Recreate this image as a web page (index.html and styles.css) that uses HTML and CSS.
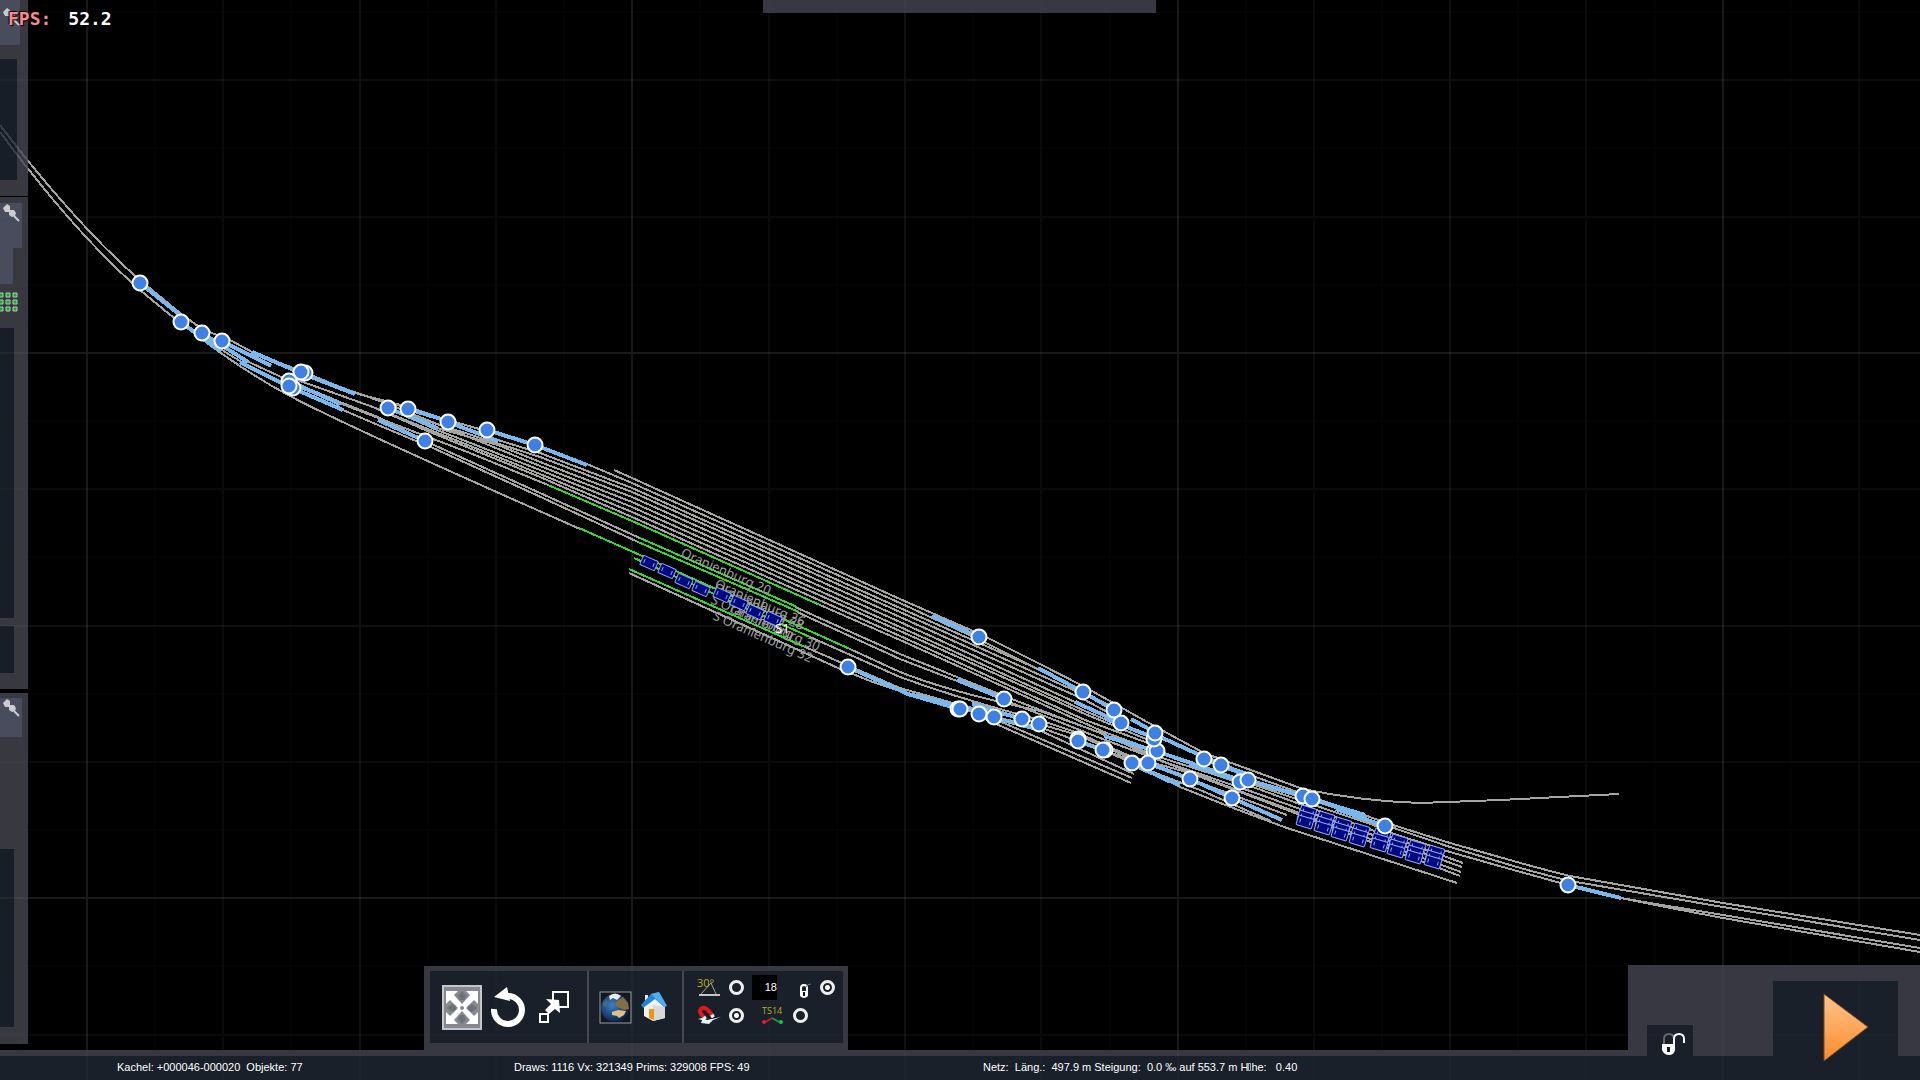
FILE: index.html
```html
<!DOCTYPE html>
<html lang="de">
<head>
    <meta charset="UTF-8">
    <meta name="viewport" content="width=device-width, initial-scale=1.0">
    <title>Gleisplan Oranienburg</title>
    <link rel="stylesheet" href="styles.css">
</head>
<body>
    <!-- Track map -->
    <svg class="map" viewBox="0 0 1920 1080" preserveAspectRatio="xMidYMid slice">
        <defs>
            <g id="grid">
                <path class="grid_faint" d="M19 0V1080M155 0V1080M291 0V1080M428 0V1080M564 0V1080M700 0V1080M837 0V1080M973 0V1080M1110 0V1080M1246 0V1080M1382 0V1080M1518 0V1080M1655 0V1080M1791 0V1080M0 12H1920M0 148H1920M0 285H1920M0 421H1920M0 557H1920M0 694H1920M0 830H1920M0 966H1920"/>
                <path class="grid_minor" d="M223 0V1080M496 0V1080M769 0V1080M1041 0V1080M1314 0V1080M1586 0V1080M1859 0V1080M0 217H1920M0 489H1920M0 762H1920M0 1035H1920"/>
                <path class="grid_middle" d="M360 0V1080M905 0V1080M1450 0V1080M0 80H1920M0 626H1920"/>
                <path class="grid_major" d="M87 0V1080M632 0V1080M1178 0V1080M1723 0V1080M0 353H1920M0 898H1920"/>
            </g>
            <circle id="sw" r="7.5"/>
            <g id="car">
                <rect x="-8" y="-5" width="16" height="10" rx="1"/>
                <path d="M-5 -2v4M5 -2v4"/>
            </g>
            <g id="cars">
                <use href="#car" transform="translate(1305 822) rotate(17)"/>
                <use href="#car" transform="translate(1323 828) rotate(17)"/>
                <use href="#car" transform="translate(1340 834) rotate(17)"/>
                <use href="#car" transform="translate(1358 840) rotate(17)"/>
                <use href="#car" transform="translate(1379 845) rotate(17)"/>
                <use href="#car" transform="translate(1396 851) rotate(17)"/>
                <use href="#car" transform="translate(1414 857) rotate(17)"/>
                <use href="#car" transform="translate(1433 862) rotate(17)"/>
            </g>
        </defs>

        <use href="#grid"/>

        <g class="tracks">
            <!-- line from the north-west -->
            <path d="M0 125C40 178 95 242 140 280L180 313L202 329L232 341L252 352L301 371L355 393L408 408L448 420"/>
            <path d="M0 132C40 186 92 248 140 290C185 328 235 367 290 396C350 428 490 489 580 529"/>
            <path d="M181 322L203 336L225 352L245 364L290 387L343 410L378 425L433 448L543 498L638 542"/>
            <path d="M202 333L240 358L290 381L340 402L378 417L425 441L540 493L642 539"/>
            <!-- sidings -->
            <path d="M614 470L632 478L900 599L980 634L1038 663L1083 686L1156 727L1204 753L1303 789Q1360 801 1420 803L1500 800L1619 794"/>
            <path d="M355 393L408 407L448 420L535 445L587 464L632 483L900 603L980 640L1083 692L1120 711"/>
            <path d="M448 422L498 440L540 453L632 488L900 608L1038 669L1075 688L1115 710"/>
            <path d="M388 408L437 424L540 457L632 492L900 612L1080 693"/>
            <path d="M437 428L498 445L540 462L632 497L900 617L1085 700L1120 719"/>
            <path d="M301 373L388 404L540 466L632 502L900 622L1075 702L1121 723"/>
            <path d="M388 408L437 430L540 470L632 507L900 627L1085 711L1121 726"/>
            <path d="M289 377L373 407L540 474L632 512L900 631L1085 714L1156 743"/>
            <path d="M373 407L425 430L540 477L632 517L900 636L1085 720L1156 746"/>
            <path d="M290 384L373 416L470 453L548 485M820 605L900 640L1104 732L1156 751L1240 780L1385 829"/>
            <path d="M795 607L900 654L1004 696L1100 733L1156 756L1250 786L1463 863"/>
            <path d="M797 612L900 659L957 681L1004 700L1100 738L1156 759L1250 791L1462 867"/>
            <path d="M850 649L900 672Q950 692 1040 711L1104 734L1156 759L1250 795L1461 872"/>
            <path d="M810 637L900 677Q960 699 1040 720L1078 733L1132 757L1190 773L1460 876"/>
            <path d="M805 647L900 688L960 705L1022 719L1078 735L1132 759L1190 779L1287 815"/>
            <path d="M629 573L838 668L870 681L908 694L960 709L1039 727L1078 741L1103 750L1148 766"/>
            <path d="M1039 730L1134 774M985 715L1132 778M980 717L1131 783"/>
            <path d="M1103 750L1132 763L1180 787L1233 808L1287 828L1457 883M1148 770L1200 790L1271 821"/>
            <!-- line to the south-east -->
            <path d="M1204 756L1250 775L1303 794L1393 825L1450 843L1517 862Q1545 870 1570 876L1723 903L1920 935"/>
            <path d="M1240 780L1312 800L1385 825L1450 847L1517 867Q1545 875 1570 881L1723 907L1920 940"/>
            <path d="M1385 831L1450 852L1517 871L1568 885L1621 898L1650 903L1723 915L1920 948"/>
            <path d="M1621 898L1660 906L1723 918L1920 952"/>
        </g>

        <g class="platforms">
            <path d="M548 485L632 521L820 605"/>
            <path d="M640 538L797 607M638 542L799 612"/>
            <path d="M579 528L640 555L850 649"/>
            <path d="M634 558L810 637M629 569L805 647"/>
        </g>

        <g class="switch_legs">
            <path d="M140 283L180 315M181 322L221 352M202 333L248 362M222 341L271 366"/>
            <path d="M252 352L301 373L355 394M240 362L289 387M289 381L340 404M290 387L343 410"/>
            <path d="M388 408L437 428M408 409L448 421M448 422L498 441M487 430L535 445L587 465M378 420L425 441"/>
            <path d="M932 616L979 637M1038 668L1083 692L1114 710M1075 702L1121 723M1106 719L1155 738M1131 719L1156 733"/>
            <path d="M1104 736L1156 751L1240 780M1156 735L1204 757M1190 764L1240 782M1204 759L1256 779M1221 765L1250 775"/>
            <path d="M957 680L1004 699M848 667L908 694L959 709M908 694L979 711M972 704L1022 719M979 714L1045 731"/>
            <path d="M1078 741L1103 750M1140 768L1180 785M1132 763L1170 782M1148 763L1190 779L1232 798L1282 820"/>
            <path d="M1248 780L1303 796M1312 799L1365 815M1336 809L1385 826M1568 885L1621 898"/>
        </g>

        <g class="labels">
            <text transform="translate(680 556) rotate(24)">Oranienburg 20</text>
            <text transform="translate(714 587) rotate(24)">Oranienburg 26</text>
            <text transform="translate(713 591) rotate(24)">Oranienburg 28</text>
            <text transform="translate(710 603) rotate(24)">S Oranienburg</text>
            <text transform="translate(729 612) rotate(24)">Oranienburg 30</text>
            <text transform="translate(712 619) rotate(24)">S Oranienburg 32</text>
        </g>

        <!-- wagons -->
        <g class="cars">
            <use href="#car" transform="translate(649 563) rotate(24)"/>
            <use href="#car" transform="translate(667 571) rotate(24)"/>
            <use href="#car" transform="translate(684 581) rotate(24)"/>
            <use href="#car" transform="translate(701 589) rotate(24)"/>
            <use href="#car" transform="translate(722 595) rotate(24)"/>
            <use href="#car" transform="translate(739 603) rotate(24)"/>
            <use href="#car" transform="translate(755 612) rotate(24)"/>
            <use href="#car" transform="translate(773 619) rotate(24)"/>
            <use href="#cars" x="3" y="-10"/>
            <use href="#cars" x="1" y="-5"/>
            <use href="#cars"/>
        </g>
        <text class="label_train" x="775" y="633">S1</text>

        <g class="switches">
            <use href="#sw" x="140" y="283"/>
            <use href="#sw" x="181" y="322"/>
            <use href="#sw" x="202" y="333"/>
            <use href="#sw" x="222" y="341"/>
            <use href="#sw" x="305" y="373"/>
            <use href="#sw" x="289" y="381"/>
            <use href="#sw" x="301" y="372"/>
            <use href="#sw" x="293" y="388"/>
            <use href="#sw" x="289" y="386"/>
            <use href="#sw" x="388" y="408"/>
            <use href="#sw" x="408" y="409"/>
            <use href="#sw" x="448" y="422"/>
            <use href="#sw" x="487" y="430"/>
            <use href="#sw" x="535" y="445"/>
            <use href="#sw" x="425" y="441"/>
            <use href="#sw" x="848" y="667"/>
            <use href="#sw" x="979" y="637"/>
            <use href="#sw" x="1083" y="692"/>
            <use href="#sw" x="1114" y="710"/>
            <use href="#sw" x="1121" y="723"/>
            <use href="#sw" x="1004" y="699"/>
            <use href="#sw" x="958" y="709"/>
            <use href="#sw" x="960" y="709"/>
            <use href="#sw" x="979" y="714"/>
            <use href="#sw" x="994" y="717"/>
            <use href="#sw" x="1022" y="719"/>
            <use href="#sw" x="1039" y="724"/>
            <use href="#sw" x="1078" y="739"/>
            <use href="#sw" x="1078" y="741"/>
            <use href="#sw" x="1105" y="750"/>
            <use href="#sw" x="1103" y="750"/>
            <use href="#sw" x="1154" y="751"/>
            <use href="#sw" x="1157" y="751"/>
            <use href="#sw" x="1154" y="739"/>
            <use href="#sw" x="1155" y="733"/>
            <use href="#sw" x="1132" y="763"/>
            <use href="#sw" x="1148" y="763"/>
            <use href="#sw" x="1190" y="779"/>
            <use href="#sw" x="1232" y="798"/>
            <use href="#sw" x="1204" y="759"/>
            <use href="#sw" x="1221" y="765"/>
            <use href="#sw" x="1240" y="782"/>
            <use href="#sw" x="1248" y="780"/>
            <use href="#sw" x="1303" y="796"/>
            <use href="#sw" x="1312" y="799"/>
            <use href="#sw" x="1385" y="826"/>
            <use href="#sw" x="1568" y="885"/>
        </g>
    </svg>

    <div class="top_panel"></div>

    <!-- Panels that are slid out to the left -->
    <div class="side">
        <section class="panel panel_one">
            <div class="panel_title">
                <svg class="pin" viewBox="0 0 18 18"><path d="M1 4L5 0L8 2L8 6L12 6L14 9L13 12L10 13L7 11L7 8L3 8Z"/><path class="needle" d="M12 12L17 17"/></svg>
            </div>
            <div class="panel_body"></div>
        </section>
        <section class="panel panel_two">
            <div class="panel_title">
                <svg class="pin" viewBox="0 0 18 18"><path d="M1 4L5 0L8 2L8 6L12 6L14 9L13 12L10 13L7 11L7 8L3 8Z"/><path class="needle" d="M12 12L17 17"/></svg>
            </div>
            <div class="panel_step"></div>
            <svg class="cells" viewBox="0 0 18 20">
                <path d="M-1 1h4v4h-4zM6 1h4v4h-4zM13 1h4v4h-4zM-1 8h4v4h-4zM6 8h4v4h-4zM13 8h4v4h-4zM-1 15h4v4h-4zM6 15h4v4h-4zM13 15h4v4h-4z"/>
            </svg>
            <div class="panel_body"></div>
            <div class="panel_body panel_foot"></div>
        </section>
        <section class="panel panel_three">
            <div class="panel_title">
                <svg class="pin" viewBox="0 0 18 18"><path d="M1 4L5 0L8 2L8 6L12 6L14 9L13 12L10 13L7 11L7 8L3 8Z"/><path class="needle" d="M12 12L17 17"/></svg>
            </div>
            <div class="panel_body"></div>
        </section>
    </div>

    <div class="fps"><span class="fps_name">FPS:</span><span>52.2</span></div>

    <footer class="bottom">
        <div class="dock">
            <div class="toolbar">
                <div class="tools">
                    <button class="tool tool_active" aria-label="Verschieben">
                        <svg viewBox="0 0 40 45" width="40" height="45">
                            <rect x="1" y="1" width="38" height="43" fill="#868a90" stroke="#c4c6ca" stroke-width="2"/>
                            <path d="M4 6h12l-4 4 8 9 8-9-4-4h12v13l-4-4-8 8 8 8 4-4v12H24l4-4-8-9-8 9 4 4H4V27l4 4 8-8-8-8-4 4z" fill="#fff"/>
                            <path d="M20 6l4 5-2 4h-4l-2-4zM20 39l4-5-2-4h-4l-2 4zM5 23l5-4 4 2v4l-4 2zM35 23l-5-4-4 2v4l4 2z" fill="#6d7178"/>
                            <circle cx="20" cy="23" r="2" fill="#868a90"/>
                        </svg>
                    </button>
                    <button class="tool" aria-label="Drehen">
                        <svg viewBox="0 0 36 40" width="36" height="40">
                            <path d="M4 22a14 14 0 1 0 14-13" fill="none" stroke="#fff" stroke-width="6"/>
                            <path d="M4 10L17 0l3 14z" fill="#fff"/>
                        </svg>
                    </button>
                    <button class="tool tool_scale" aria-label="Skalieren">
                        <svg viewBox="0 0 32 34" width="32" height="34">
                            <rect x="15" y="2" width="15" height="15" fill="none" stroke="#fff" stroke-width="2"/>
                            <rect x="2" y="24" width="8" height="8" fill="none" stroke="#fff" stroke-width="2"/>
                            <path d="M8 9l13 1 1 13-5-4-6 5-4-4 6-6z" fill="#fff"/>
                        </svg>
                    </button>
                </div>
                <div class="tools tools_world">
                    <button class="tool" aria-label="Globus">
                        <svg viewBox="0 0 33 33" width="33" height="33">
                            <defs>
                                <radialGradient id="sea" cx=".4" cy=".4" r=".6">
                                    <stop offset="0" stop-color="#4080c4"/>
                                    <stop offset="1" stop-color="#0a2450"/>
                                </radialGradient>
                            </defs>
                            <rect x="1" y="1" width="31" height="31" fill="#15171c" stroke="#9a9ca0"/>
                            <circle cx="16" cy="17" r="14" fill="url(#sea)"/>
                            <path d="M10 5q6-5 12 0l-4 4-4-2-3 2z" fill="#e6ebf0"/>
                            <path d="M18 10l6-4 5 6 1 6-5 1-4-2-3-1-2-3z" fill="#806f45"/>
                            <path d="M13 21l6-2 8 1-2 4-5 3-2-2-5-1z" fill="#e0c083"/>
                            <path d="M4 12l3-3 2 3-2 4-3-1z" fill="#3b6f80"/>
                        </svg>
                    </button>
                    <button class="tool" aria-label="Startposition">
                        <svg viewBox="0 0 28 30" width="28" height="30">
                            <path d="M4 13l9-8 12 9v12l-12 3-9-5z" fill="#f1f1ef"/>
                            <path d="M13 13l12 2v11l-12 3z" fill="#d8d8d6"/>
                            <path d="M5 3h3v6H5z" fill="#e9e9e9"/>
                            <path d="M1 13L11 2l8-2 8 14-3 1-9-8-12 9z" fill="#2186d8"/>
                            <path d="M11 2l8-2 8 14-3 1z" fill="#50acef"/>
                            <path d="M9 17h5v11l-5-2z" fill="#ee9516"/>
                        </svg>
                    </button>
                </div>
                <div class="settings">
                    <div class="row">
                        <label for="snap_angle">
                            <svg class="icon" viewBox="0 0 24 20" width="24" height="20">
                                <text class="icon_text icon_degree" x="0" y="10">30°</text>
                                <path d="M4 17L14 6l5 11" fill="none" stroke="#aaa58a" stroke-width="1"/>
                                <path d="M2 18h21" stroke="#c4c4c4" stroke-width="2"/>
                            </svg>
                        </label>
                        <input type="radio" id="snap_angle" name="angle">
                        <input class="number" type="text" value="18" aria-label="Anzahl">
                        <label class="lock_label" for="lock">
                            <svg class="icon" viewBox="0 0 14 18" width="14" height="18">
                                <path d="M3 9V6q0-3 3-3t3 3v3" fill="none" stroke="#fff" stroke-width="2"/>
                                <path d="M8 5q1-3 5-3" fill="none" stroke="#777" stroke-width="1"/>
                                <path d="M2 9h8v5q-4 4-8 0z" fill="#fff"/>
                                <path d="M5 10h2v4H5z" fill="#111"/>
                            </svg>
                        </label>
                        <input type="radio" id="lock" name="lock" checked>
                    </div>
                    <div class="row">
                        <label for="magnet">
                            <svg class="icon" viewBox="0 0 24 20" width="24" height="20">
                                <path d="M1 14l4-1 5 2 14-3-8 3-4 4-8-1 1-3z" fill="#e8f2fa"/>
                                <path d="M7 12Q1 7 4 4t8 2l3 4" fill="none" stroke="#e01818" stroke-width="4"/>
                                <path d="M7 7l4 4" stroke="#19202a" stroke-width="2"/>
                                <path d="M6 14l3-2M14 12l3-2" stroke="#fff" stroke-width="3"/>
                            </svg>
                        </label>
                        <input type="radio" id="magnet" name="magnet" checked>
                        <label class="ts_label" for="ts14">
                            <svg class="icon" viewBox="0 0 24 20" width="24" height="20">
                                <text class="icon_text" x="1" y="9">TS14</text>
                                <path d="M3 18l8-5" stroke="#c81a24" stroke-width="2"/>
                                <path d="M11 13l9 5" stroke="#17a04a" stroke-width="2"/>
                                <circle cx="3" cy="17" r="2" fill="#e02030"/>
                                <circle cx="20" cy="17" r="2" fill="#20c050"/>
                            </svg>
                        </label>
                        <input type="radio" id="ts14" name="ts14">
                    </div>
                </div>
            </div>
            <div class="play_panel">
                <button class="unlock" aria-label="Entsperren">
                    <svg viewBox="0 0 26 24" width="26" height="24">
                        <path d="M3 13V7q0-5 5-5t5 5v5" fill="none" stroke="#65686d" stroke-width="2"/>
                        <path d="M13 13V7q0-5 5-5t5 5v4" fill="none" stroke="#fff" stroke-width="2"/>
                        <path d="M1 12h13v6q-1 5-6 5t-7-5z" fill="#fff"/>
                        <path d="M6 15h3v5H6z" fill="#111820"/>
                    </svg>
                </button>
                <button class="play" aria-label="Start">
                    <svg viewBox="0 0 46 70" width="46" height="70">
                        <defs>
                            <linearGradient id="orange" x1="0" y1="0" x2="0" y2="1">
                                <stop offset="0" stop-color="#ffc58c"/>
                                <stop offset="1" stop-color="#fb8a2c"/>
                            </linearGradient>
                        </defs>
                        <path d="M1 1L45 34L1 68Z" fill="url(#orange)" stroke="#7b4a1c"/>
                    </svg>
                </button>
            </div>
        </div>
        <div class="status">
            <span>Kachel: +000046-000020&nbsp; Objekte: 77</span>
            <span>Draws: 1116 Vx: 321349 Prims: 329008 FPS: 49</span>
            <span>Netz:&nbsp; Läng.:&nbsp; 497.9 m Steigung:&nbsp; 0.0 ‰ auf 553.7 m H<i class="missing"></i>he:&nbsp;&nbsp; 0.40</span>
        </div>
    </footer>

    <!-- the grid shines through the panels -->
    <svg class="map map_shine" viewBox="0 0 1920 1080" preserveAspectRatio="xMidYMid slice"><use href="#grid"/></svg>
</body>
</html>
```
FILE: styles.css
```css
* {
    margin: 0;
    padding: 0;
    box-sizing: border-box;
}

body {
    height: 100vh;
    overflow: hidden;
    background-color: #000;
    color: #fff;
    font-family: "Liberation Sans", Arial, sans-serif;
    font-size: 11px;
}

button {
    border: none;
    background: none;
    cursor: pointer;
}

svg {
    display: block;
}

/* Map */
.map {
    position: absolute;
    inset: 0;
    width: 100%;
    height: 100%;
}

.map_shine {
    opacity: 0.3;
    pointer-events: none;
}

.grid_faint,
.grid_minor,
.grid_middle,
.grid_major {
    stroke: #fff;
    stroke-width: 2;
    stroke-opacity: 0.03;
}

.grid_faint {
    stroke-opacity: 0.01;
}

.grid_middle {
    stroke-opacity: 0.05;
}

.grid_major {
    stroke-opacity: 0.08;
}

.tracks,
.platforms,
.switch_legs {
    fill: none;
    shape-rendering: crispEdges;
}

.tracks {
    stroke: #a5a5a3;
    stroke-width: 2;
}

.platforms {
    stroke: #3bd42c;
    stroke-width: 2;
}

.switch_legs {
    stroke: #78b8ee;
    stroke-width: 4;
}

.switches {
    fill: #3f80e4;
    stroke: #fff;
    stroke-width: 2;
}

.cars {
    fill: #000a80;
    stroke: #98a4f4;
    stroke-width: 1;
}

.labels,
.label_train {
    fill: #a0a0a0;
    font-family: "Noto Sans", sans-serif;
    font-size: 13px;
}

.label_train {
    fill: #fff;
}

/* Panels at the edges */
.top_panel {
    position: absolute;
    top: 0;
    left: 763px;
    width: 393px;
    height: 13px;
    background-color: #373841;
}

.side {
    position: absolute;
    top: 0;
    bottom: 36px;
    left: 0;
    display: flex;
    flex-direction: column;
    width: 28px;
    opacity: 0.8;
}

.panel {
    display: flex;
    flex-direction: column;
    background-color: #464752;
}

.panel_one {
    height: 196px;
    padding-bottom: 16px;
}

.panel_two {
    height: 492px;
    margin-top: 1px;
    padding: 6px 0 16px;
}

.panel_three {
    flex: 1;
    margin-top: 4px;
    padding: 5px 0 17px;
}

.panel_title {
    width: 22px;
    height: 45px;
    padding: 1px 2px;
    background-color: #5a5f73;
}

.panel_one .panel_title {
    width: 20px;
    padding-top: 8px;
}

.panel_three .panel_title {
    height: 39px;
}

.panel_step {
    width: 13px;
    height: 36px;
    background-color: #5a5f73;
}

.panel_body {
    flex: 1;
    width: 14px;
    margin-top: 16px;
    background-color: #1e2631;
}

.panel_one .panel_body {
    width: 17px;
    margin-top: 14px;
}

.panel_three .panel_body {
    margin-top: 112px;
}

.panel_foot {
    flex: none;
    height: 47px;
    margin-top: 8px;
}

.pin {
    width: 18px;
    height: 18px;
    fill: #fff;
}

.needle {
    stroke: #fff;
    stroke-width: 2;
}

.cells {
    width: 18px;
    height: 20px;
    margin-top: 8px;
    fill: #18d838;
    stroke: #e0ffe0;
}

.fps {
    position: absolute;
    top: 9px;
    left: 8px;
    display: flex;
    gap: 17px;
    font-family: "DejaVu Sans Mono", monospace;
    font-size: 18px;
    font-weight: bold;
    line-height: 20px;
    text-shadow: 1px 1px 1px #000, -1px -1px 1px #000;
}

.fps_name {
    color: #fa8a8c;
}

/* Bottom */
.bottom {
    position: absolute;
    right: 0;
    bottom: 0;
    left: 0;
}

.dock {
    display: flex;
    justify-content: space-between;
    align-items: flex-end;
    padding-left: 424px;
    border-bottom: 6px solid #373841;
}

.toolbar {
    display: flex;
    width: 424px;
    padding: 5px 5px 7px 6px;
    background-color: #373841;
}

.tools,
.settings {
    height: 72px;
    background-color: #19202a;
}

.tools {
    display: flex;
    align-items: center;
    gap: 8px;
    width: 159px;
    padding-left: 12px;
    border-right: 2px solid #464851;
}

.tool_scale {
    margin-left: 4px;
}

.tools_world {
    width: 95px;
    padding-left: 10px;
}

.settings {
    flex: 1;
    padding: 2px 0 0 13px;
}

.row {
    display: flex;
    align-items: center;
    height: 28px;
}

.icon_text {
    fill: #b8ae1c;
    font-family: "Open Sans", sans-serif;
    font-size: 9px;
}

.icon_degree {
    font-size: 11px;
}

input[type="radio"] {
    appearance: none;
    width: 15px;
    height: 15px;
    margin-left: 8px;
    border: 3px solid #eee;
    border-radius: 50%;
    background-color: #19202a;
}

input[type="radio"]:checked {
    background-image: radial-gradient(circle, #fff 2px, #19202a 3px);
}

.number {
    width: 25px;
    height: 25px;
    margin-left: 8px;
    border: none;
    background-color: #000;
    color: #fff;
    font-family: inherit;
    font-size: 11px;
    text-align: right;
}

.lock_label {
    margin-left: 21px;
    padding-top: 8px;
}

.ts_label {
    margin-left: 17px;
}

.play_panel {
    display: flex;
    justify-content: space-between;
    align-items: flex-end;
    width: 292px;
    height: 91px;
    margin-bottom: -6px;
    padding: 0 22px 0 19px;
    background-color: #373841;
}

.unlock {
    width: 46px;
    height: 31px;
    padding: 6px 0 0 14px;
    background-color: #19202a;
}

.play {
    width: 125px;
    height: 75px;
    padding: 12px 0 0 50px;
    background-color: #19202a;
}

.status {
    display: grid;
    grid-template-columns: 397fr 469fr 937fr;
    height: 24px;
    padding-left: 117px;
    background-color: #19202a;
    line-height: 23px;
    white-space: nowrap;
}

.missing {
    display: inline-block;
    width: 3px;
    height: 8px;
    border: 1px solid #aaa;
}
```
